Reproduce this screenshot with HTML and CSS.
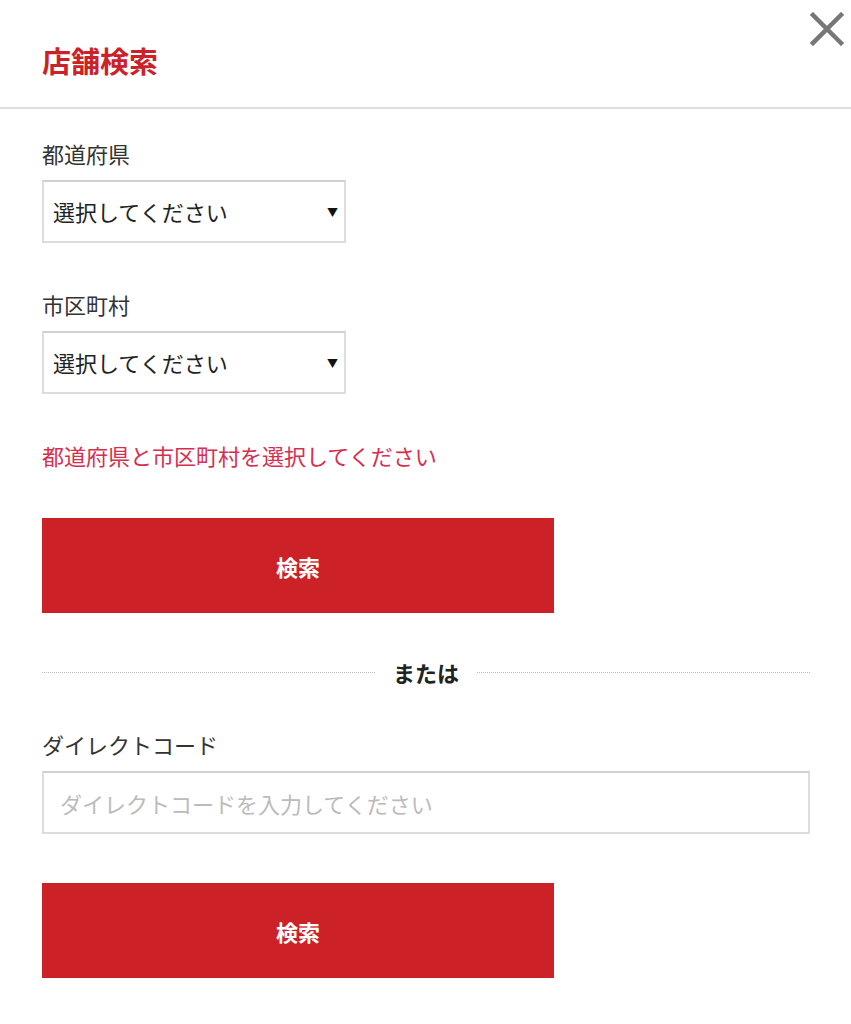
FILE: index.html
```html
<!DOCTYPE html>
<html lang="ja">
<head>
    <meta charset="UTF-8">
    <meta name="viewport" content="width=device-width, initial-scale=1.0">
    <title>店舗検索</title>
    <link rel="stylesheet" href="styles.css">
</head>
<body>

    <div class="header">
        <h1 class="title">店舗検索</h1>
        <button class="close" aria-label="閉じる">
            <svg width="34" height="34" viewBox="0 0 34 34"><path d="M3 3 L31 31 M31 3 L3 31" stroke="#777" stroke-width="4.5" stroke-linecap="square"/></svg>
        </button>
    </div>

    <div class="form">
        <label class="label first">都道府県</label>
        <div class="select-wrap">
            <select class="select">
                <option>選択してください</option>
            </select>
        </div>

        <label class="label">市区町村</label>
        <div class="select-wrap">
            <select class="select">
                <option>選択してください</option>
            </select>
        </div>

        <p class="error">都道府県と市区町村を選択してください</p>

        <button class="search">検索</button>

        <div class="or"><span>または</span></div>

        <label class="label code-label">ダイレクトコード</label>
        <input class="code" type="text" placeholder="ダイレクトコードを入力してください">

        <button class="search second">検索</button>
    </div>

</body>
</html>
```

FILE: styles.css
```css
body { margin: 0; background: #fff; color: #333; font-family: "Noto Sans CJK JP", "Noto Sans", sans-serif; }
.header { position: relative; height: 109px; box-sizing: border-box; padding: 40px 42px 0; border-bottom: 2px solid #ddd; }
.title { margin: 0; font-size: 29px; line-height: 40px; font-weight: bold; color: #cc2127; }
.close { position: absolute; top: 12px; right: 7px; padding: 0; border: none; background: none; width: 34px; height: 34px; }
.close svg { display: block; }
.form { padding: 0 41px 40px 42px; }
.label { display: block; margin: 46px 0 12px; font-size: 22px; line-height: 30px; color: #333; }
.label.first { margin-top: 29px; }
.label.code-label { margin-top: 42px; }
.select-wrap { position: relative; width: 304px; }
.select-wrap::after { content: "▼"; position: absolute; right: 8px; top: 50%; transform: translateY(-50%); font-size: 11px; color: #111; pointer-events: none; }
.select { appearance: none; -webkit-appearance: none; width: 100%; height: 63px; box-sizing: border-box; padding: 0 36px 2px 9px; border: 2px solid #ddd; border-top-color: #cfcfcf; border-radius: 0; background: #fff; font-family: inherit; font-size: 22px; color: #222; }
.error { margin: 46px 0 0; font-size: 22px; line-height: 30px; color: #d82e4e; }
.search { display: block; width: 512px; height: 95px; margin-top: 48px; border: none; background: #cc2127; color: #fff; font-family: inherit; font-size: 22px; font-weight: bold; }
.search.second { margin-top: 49px; }
.or { display: flex; align-items: center; gap: 18px; margin-top: 44px; height: 30px; font-size: 22px; font-weight: bold; color: #222; }
.or::before, .or::after { content: ""; flex: 1; border-top: 1px dotted #bbb; }
.code { display: block; width: 768px; height: 63px; box-sizing: border-box; padding: 0 16px; border: 2px solid #ddd; border-top-color: #cfcfcf; border-radius: 0; font-family: inherit; font-size: 22px; color: #333; }
.code::placeholder { color: #bbb; }
```
